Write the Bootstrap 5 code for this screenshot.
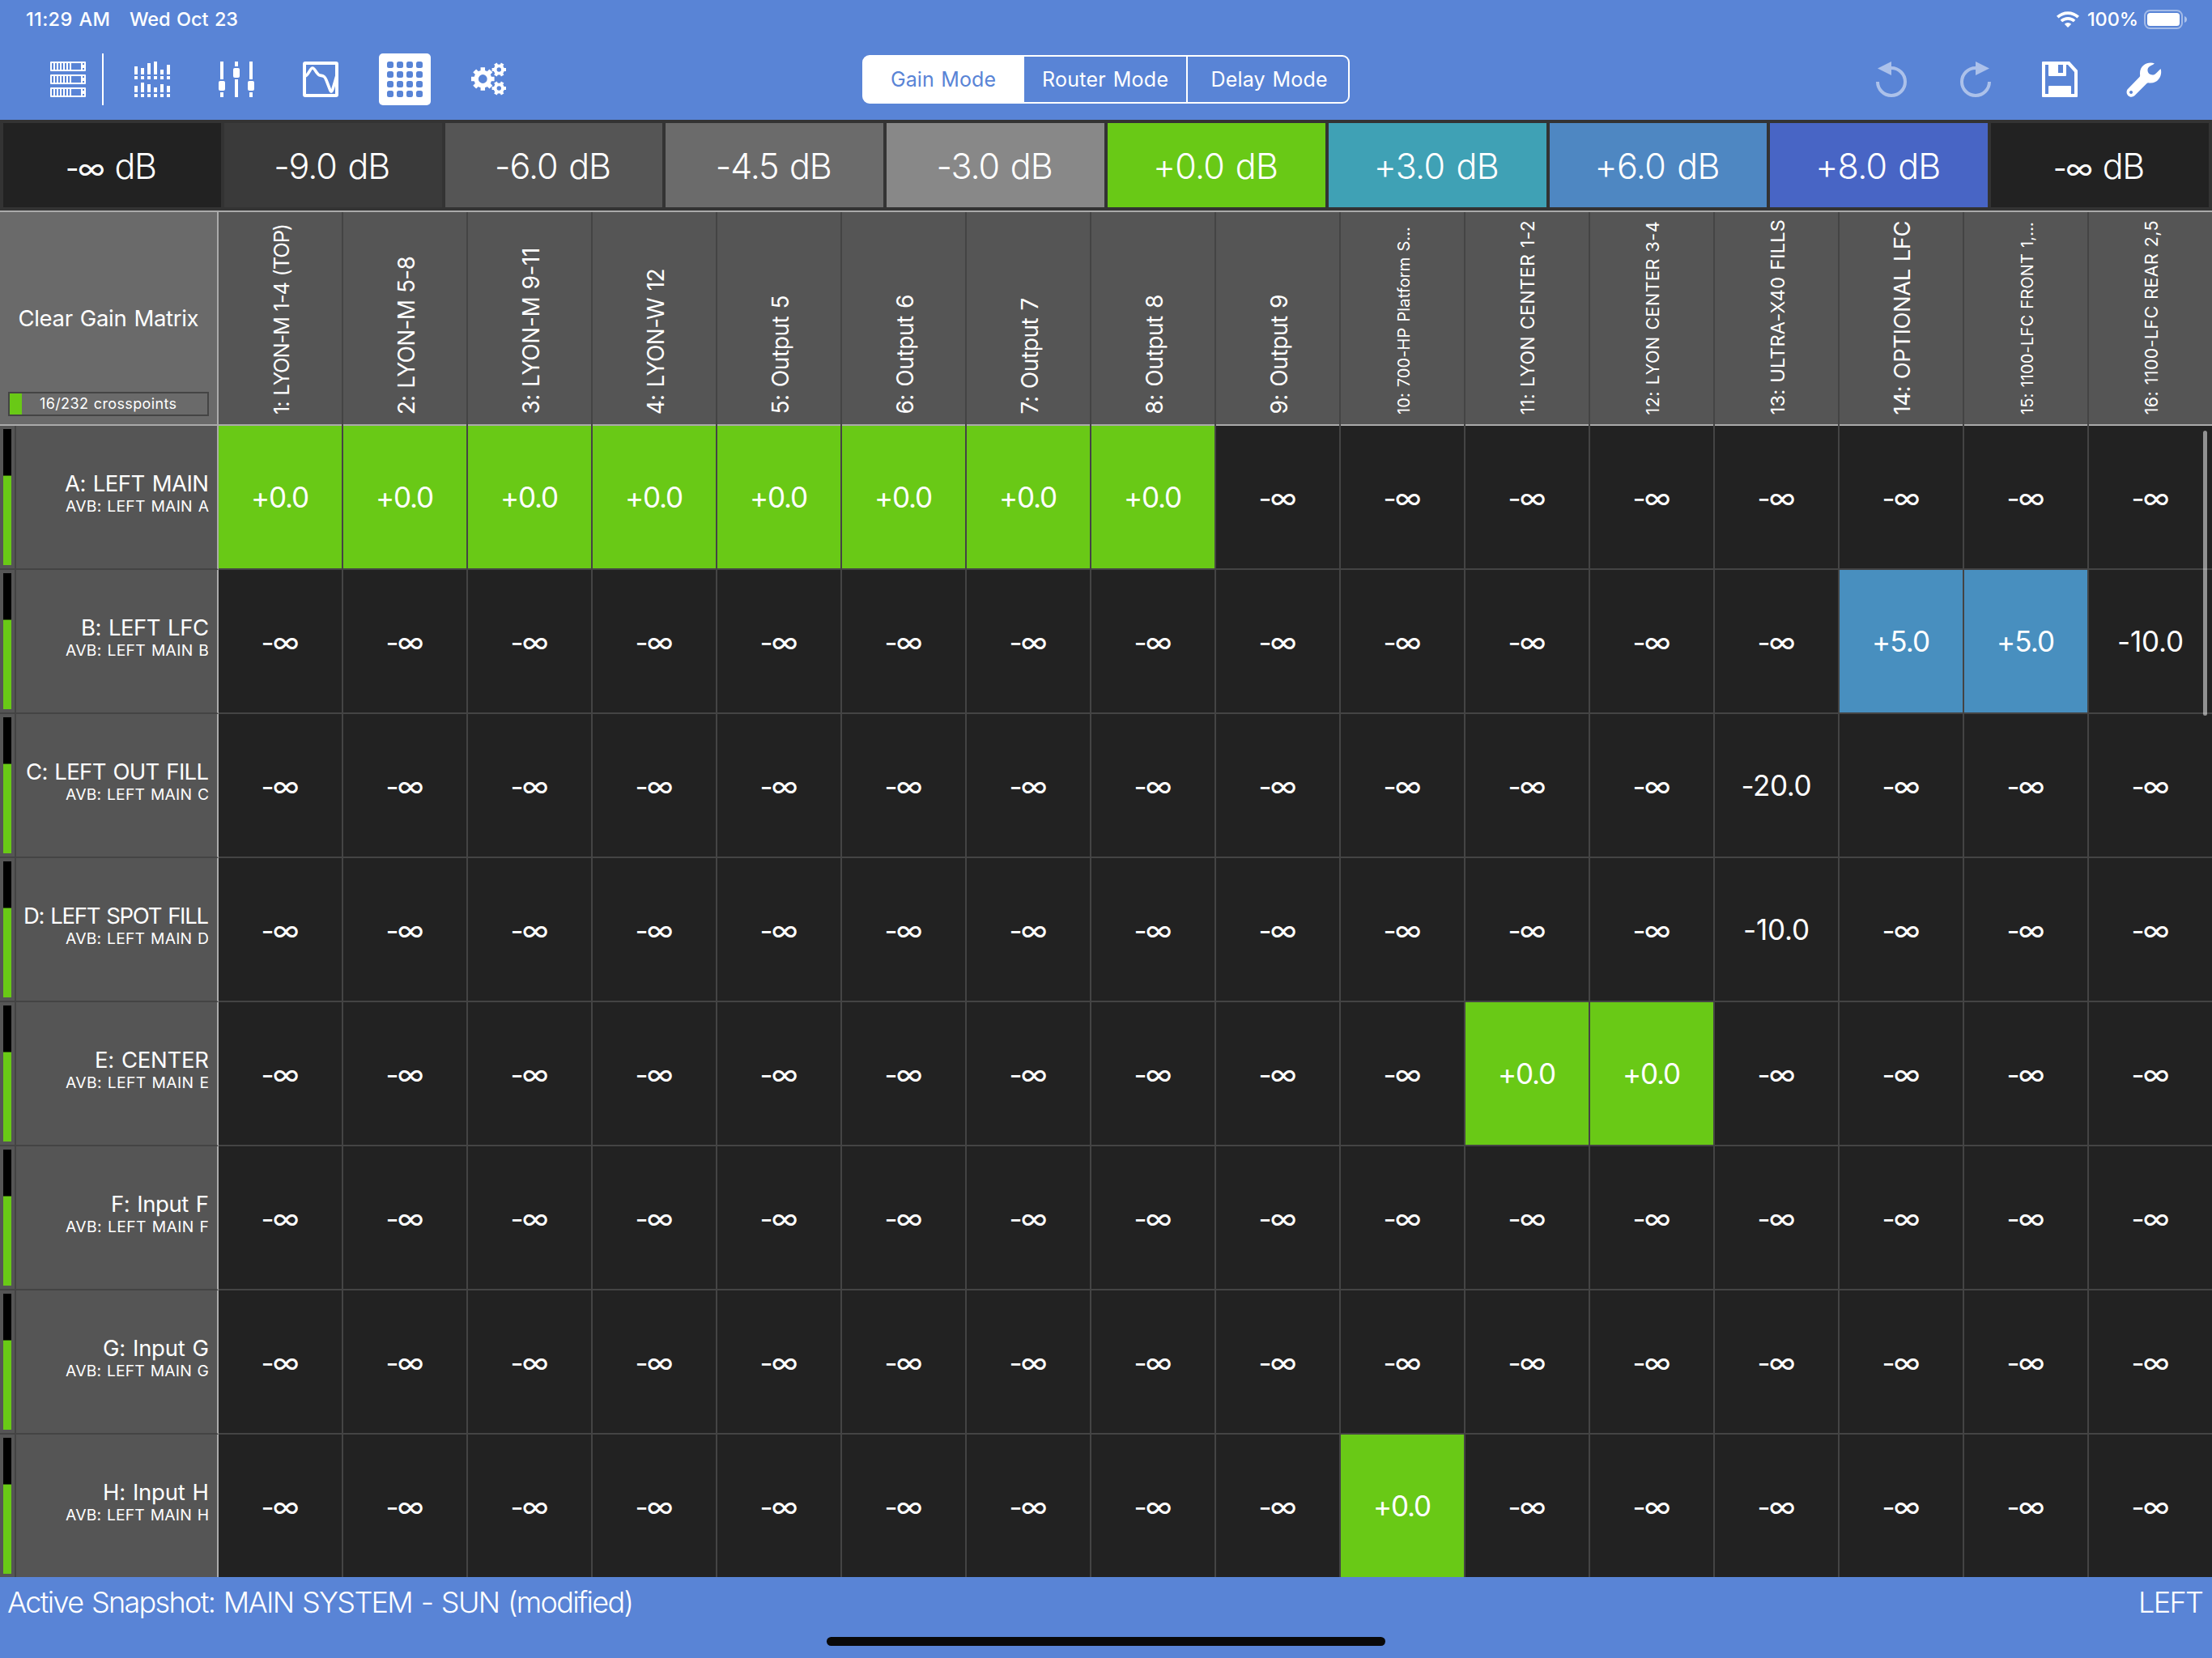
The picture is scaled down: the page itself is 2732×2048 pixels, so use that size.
<!DOCTYPE html>
<html lang="en">
<head>
    <meta charset="UTF-8">
    <meta name="viewport" content="width=device-width, initial-scale=1.0">
    <title>Gain Matrix</title>
    <link href="https://cdn.jsdelivr.net/npm/bootstrap@5.3.2/dist/css/bootstrap.min.css" rel="stylesheet">
    <style>
        body {
            width: 2732px;
            height: 2048px;
            overflow: hidden;
            background: #222;
            color: #fff;
            font-family: Inter, "Liberation Sans", sans-serif;
            line-height: 1;
        }
        .bg-app { background: #5984d6; }
        .fit { white-space: nowrap; display: inline-block; word-spacing: .06em; }

        /* status bar + toolbar */
        .app-header { height: 148px; }
        .status-bar { height: 48px; padding: 0 30px 0 32px; font-size: 23.5px; font-weight: 450; }
        .battery-text { margin: 0 7px 0 10px; }
        .toolbar { height: 100px; padding: 0 62px; }
        .tool-group { width: 1003px; }
        .tool-divider { width: 2px; height: 64px; background: #fff; margin: 0 38px 0 20px; }
        .tool-gap { margin-left: 60px; }
        .tool-active { width: 64px; height: 64px; background: #fff; border-radius: 5px; margin: 0 50px; }
        .mode-switch { width: 602px; height: 60px; }
        .mode-switch .btn {
            --bs-btn-color: #fff;
            --bs-btn-border-color: #fff;
            --bs-btn-border-width: 2px;
            --bs-btn-border-radius: 9px;
            --bs-btn-active-bg: #fff;
            --bs-btn-active-color: #5984d6;
            --bs-btn-active-border-color: #fff;
            --bs-btn-padding-x: 0;
            --bs-btn-padding-y: 0;
            width: 200px;
            flex: 0 0 auto;
            font-size: 25px;
            padding-top: 2px;
        }
        .mode-switch .btn + .btn { width: 204px; margin-left: -2px !important; }
        .mode-switch .btn:last-child { width: 202px; padding-left: 3px; }

        /* gain presets */
        .preset-bar { height: 112px; padding: 4px; gap: 4px; background: #333; }
        .preset { flex: 1 1 0; font-size: 43px; font-weight: 300; padding: 2px 2px 0 0; }
        .preset-inf { font-size: 36px; font-weight: 400; }

        /* matrix */
        .matrix-head { height: 266px; border-top: 2px solid #aaa; }
        .corner { width: 270px; flex: none; background: #6a6a6a; border-right: 2px solid #aaa; box-shadow: inset 0 -2px #aaa; }
        .corner-title { font-size: 27.5px; padding-top: 118px; }
        .crosspoints { height: 30px; margin: 0 10px 12px; border: 2px solid #444; font-size: 18px; }
        .crosspoints-bar { width: 15px; background: #69c916; }
        .out-head {
            width: 154px;
            flex: none;
            padding: 0 0 14px 3px;
            background: #555;
            border-right: 2px solid #444;
            box-shadow: inset 0 -2px #aaa;
        }
        .out-head span { writing-mode: vertical-rl; transform: rotate(180deg); }
        .in-row { height: 178px; }
        .in-row:last-child { height: 176px; }
        .in-head { width: 270px; flex: none; background: #555; border-right: 2px solid #aaa; }
        .in-row:not(:last-child) > div { border-bottom: 2px solid #444; }
        .meter { width: 20px; border-right: 2px solid #444; padding: 4px; }
        .meter-peak { height: 57px; background: #000; }
        .meter-level { background: #69c916; border-top: 1px solid #2e5a0a; }
        .in-label { padding: 55px 10px 0 0; }
        .in-name { font-size: 27.5px; line-height: 32px; }
        .in-source { font-size: 19.3px; line-height: 25px; }
        .gain { width: 154px; flex: none; border-right: 2px solid #444; font-size: 35px; background: #222; }
        .gain-off { padding-top: 2px; }
        .gain-0 { background: #69c916; }
        .gain-5 { background: #488fbf; }
        .scroll-thumb { right: 6px; top: 272px; width: 5px; height: 352px; border-radius: 3px; background: rgba(255, 255, 255, .5); }

        .app-footer { height: 100px; padding: 9px 10px 0 9px; font-size: 36px; font-weight: 300; line-height: 44px; }
        .home-bar { left: 1021px; bottom: 15px; width: 690px; height: 11px; border-radius: 6px; background: #090909; }
    </style>
</head>
<body>
    <header class="app-header bg-app">
        <div class="status-bar d-flex align-items-center justify-content-between">
            <div class="d-flex" style="gap: 24px">
                <span class="fit" data-w="104">11:29 AM</span>
                <span class="fit" data-w="134">Wed Oct 23</span>
            </div>
            <div class="d-flex align-items-center">
                <svg width="28" height="20" viewBox="0 0 28 20" fill="none" stroke="#fff">
                    <path d="M1.3 7.2a18.4 18.4 0 0 1 25.4 0" stroke-width="3.7"/>
                    <path d="M5.9 12a12 12 0 0 1 16.2 0" stroke-width="3.6"/>
                    <path d="M14 20l-4.2-4.3a6.2 6.2 0 0 1 8.4 0z" fill="#fff" stroke="none"/>
                </svg>
                <div class="battery-text"><span class="fit" data-w="63">100%</span></div>
                <svg width="54" height="24" viewBox="0 0 54 24">
                    <rect x="1" y="1" width="46" height="22" rx="6.5" fill="none" stroke="#fff" stroke-opacity=".45" stroke-width="2"/>
                    <rect x="4" y="4" width="40" height="16" rx="3.5" fill="#fff"/>
                    <path d="M50 8c4 1.200 4 6.800 0 8z" fill="#fff" fill-opacity=".5"/>
                </svg>
            </div>
        </div>

        <div class="toolbar d-flex align-items-center">
            <div class="tool-group d-flex align-items-center">
                <!-- device rack -->
                <svg width="44" height="44" viewBox="0 0 44 44">
                    <defs>
                        <g id="rackUnit">
                            <rect width="44" height="12" rx="1" fill="#fff"/>
                            <path d="M3 2v8M7 2v8M11 2v8M15 2v8M19 2v8M23 2v8" stroke="#5984d6" stroke-width="2"/>
                            <path d="M26 2h12v8h-12zM40 2h2v2h-2zM40 8h2v2h-2z" fill="#5984d6"/>
                        </g>
                    </defs>
                    <use href="#rackUnit"/>
                    <use href="#rackUnit" y="16"/>
                    <use href="#rackUnit" y="32"/>
                </svg>
                <div class="tool-divider"></div>
                <!-- level meters -->
                <svg width="44" height="44" viewBox="0 0 44 44" stroke="#fff" stroke-width="4">
                    <path d="M2 6V16M10 8V16M18 2V16M26 0V16M34 10V16M42 4V16"/>
                    <path d="M0 20H44M0 42H44" stroke-dasharray="4 4"/>
                    <path d="M2 30V38M10 26V38M18 28V38M26 32V38M34 28V38M42 30V38"/>
                </svg>
                <!-- faders -->
                <svg class="tool-gap" width="44" height="44" viewBox="0 0 44 44" fill="#fff">
                    <path d="M2 0h4v22h-4zM2 38h4v6h-4zM20 0h4v6h-4zM20 22h4v22h-4zM38 0h4v22h-4zM38 38h4v6h-4z"/>
                    <rect x="0" y="24" width="8" height="12" rx="2"/>
                    <rect x="18" y="8" width="8" height="12" rx="2"/>
                    <rect x="36" y="24" width="8" height="12" rx="2"/>
                </svg>
                <!-- eq curve -->
                <svg class="tool-gap" width="44" height="44" viewBox="0 0 44 44" fill="none" stroke="#fff" stroke-width="4">
                    <rect x="2" y="2" width="40" height="40" rx="1"/>
                    <path d="M3 18C7 17 9 8 12 8C15 8 17 16 21 17C26 18 27 18 29 23L34 36C35 38 36 37 37 34L42 17" stroke-width="3.600"/>
                </svg>
                <!-- matrix, selected -->
                <div class="tool-active d-flex align-items-center justify-content-center">
                    <svg width="44" height="44" viewBox="0 0 44 44" fill="#5984d6" id="gridIcon"></svg>
                </div>
                <!-- settings gears -->
                <svg width="44" height="44" viewBox="0 0 44 44" fill="none" stroke="#fff" overflow="visible" id="gearIcon"></svg>
            </div>

            <div class="mode-switch btn-group" role="group">
                <button type="button" class="btn active"><span class="fit" data-w="130">Gain Mode</span></button>
                <button type="button" class="btn"><span class="fit" data-w="156">Router Mode</span></button>
                <button type="button" class="btn"><span class="fit" data-w="144">Delay Mode</span></button>
            </div>

            <div class="d-flex ms-auto" style="gap: 60px">
                <!-- undo / redo -->
                <svg width="44" height="44" viewBox="0 0 44 44" opacity=".5" fill="#fff">
                    <path d="M5 25A17 17 0 1 0 22 8" fill="none" stroke="#fff" stroke-width="4"/>
                    <path d="M22 0V17L5 8.500z"/>
                </svg>
                <svg width="44" height="44" viewBox="0 0 44 44" opacity=".5" fill="#fff">
                    <path d="M39 25A17 17 0 1 1 22 8" fill="none" stroke="#fff" stroke-width="4"/>
                    <path d="M22 0V17L39 8.500z"/>
                </svg>
                <!-- save -->
                <svg width="44" height="44" viewBox="0 0 44 44" fill="#fff" fill-rule="evenodd">
                    <path d="M1 0H34L44 11V43Q44 44 43 44H1Q0 44 0 43V1Q0 0 1 0zM4 4V40H8V31Q8 30 9 30H35Q36 30 36 31V40H40V13L32 4H30V17Q30 18 29 18H9Q8 18 8 17V4zM20 4V14H26V4z"/>
                </svg>
                <!-- tools -->
                <svg width="44" height="44" viewBox="0 0 44 44" fill="#fff" fill-rule="evenodd">
                    <path d="M35 2.500C29 -.5 17 3 17 14.500C17 17 17.500 17.500 16.500 19L1.500 34.500C-2 40 5 47 10.500 42L25.500 27C27 25.500 28 26.500 30 26.500C41 26.500 45 15 42.500 9L37.500 14C34 18.500 26 17 26.500 10C27 6 30 6 35 2.500zM6 36a2 2 0 1 0 .1 0z"/>
                </svg>
            </div>
        </div>
    </header>

    <div class="preset-bar d-flex" id="presets"></div>

    <main class="position-relative">
        <div class="matrix-head d-flex" id="matrixHead">
            <div class="corner d-flex flex-column justify-content-between">
                <div class="corner-title text-center"><span class="fit" data-w="223">Clear Gain Matrix</span></div>
                <div class="crosspoints d-flex">
                    <div class="crosspoints-bar"></div>
                    <div class="flex-fill d-flex align-items-center justify-content-center pe-3"><span class="fit" data-w="169">16/232 crosspoints</span></div>
                </div>
            </div>
        </div>
        <div id="matrixRows"></div>
        <div class="scroll-thumb position-absolute"></div>
    </main>

    <footer class="app-footer bg-app d-flex justify-content-between position-relative">
        <span class="fit" data-w="774">Active Snapshot: MAIN SYSTEM - SUN (modified)</span>
        <span class="fit" data-w="81">LEFT</span>
        <div class="home-bar position-absolute"></div>
    </footer>

    <script src="https://cdn.jsdelivr.net/npm/bootstrap@5.3.2/dist/js/bootstrap.bundle.min.js"></script>
    <script>
        // label, background, text width
        const presets = [
            ['-∞ dB', '#222', 113], ['-9.0 dB', '#3a3a3a', 144], ['-6.0 dB', '#555', 144],
            ['-4.5 dB', '#6b6b6b', 144], ['-3.0 dB', '#888', 144], ['+0.0 dB', '#69c916', 155],
            ['+3.0 dB', '#3fa1b5', 155], ['+6.0 dB', '#4e87c2', 155], ['+8.0 dB', '#4865c5', 155],
            ['-∞ dB', '#222', 113]
        ];
        // label, font size, text length
        const outputs = [
            ['1: LYON-M 1-4 (TOP)', 25.5, 236], ['2: LYON-M 5-8', 28, 196], ['3: LYON-M 9-11', 28, 206],
            ['4: LYON-W 12', 28, 181], ['5: Output 5', 28, 147], ['6: Output 6', 28, 148],
            ['7: Output 7', 28, 144], ['8: Output 8', 28, 148], ['9: Output 9', 28, 148],
            ['10: 700-HP Platform S...', 20, 232], ['11: LYON CENTER 1-2', 23, 240],
            ['12: LYON CENTER 3-4', 21.5, 239], ['13: ULTRA-X40 FILLS', 23.5, 241],
            ['14: OPTIONAL LFC', 27.5, 240], ['15: 1100-LFC FRONT 1,...', 20, 238],
            ['16: 1100-LFC REAR 2,5', 21.5, 240]
        ];
        // label, text width
        const inputs = [
            ['A: LEFT MAIN', 178], ['B: LEFT LFC', 158], ['C: LEFT OUT FILL', 226], ['D: LEFT SPOT FILL', 229],
            ['E: CENTER', 141], ['F: Input F', 121], ['G: Input G', 131], ['H: Input H', 131]
        ];
        const gains = {
            A: { 1: '+0.0', 2: '+0.0', 3: '+0.0', 4: '+0.0', 5: '+0.0', 6: '+0.0', 7: '+0.0', 8: '+0.0' },
            B: { 14: '+5.0', 15: '+5.0', 16: '-10.0' },
            C: { 13: '-20.0' },
            D: { 13: '-10.0' },
            E: { 11: '+0.0', 12: '+0.0' },
            H: { 10: '+0.0' }
        };
        const gainClass = { '+0.0': 'gain-0', '+5.0': 'gain-5', '-∞': 'gain-off' };
        const gainWidth = { '+0.0': 72, '+5.0': 72, '-10.0': 82, '-20.0': 87, '-∞': 47 };

        document.getElementById('presets').innerHTML = presets.map(([label, color, w]) => `
            <div class="preset d-flex align-items-center justify-content-center" style="background: ${color}">
                <span class="fit" data-w="${w}">${label.replace('-∞', '<span class="preset-inf">-∞</span>')}</span>
            </div>`).join('');

        document.getElementById('matrixHead').insertAdjacentHTML('beforeend', outputs.map(([label, size, w]) => `
            <div class="out-head d-flex align-items-end justify-content-center">
                <span class="fit" data-h="${w}" style="font-size: ${size}px">${label}</span>
            </div>`).join(''));

        document.getElementById('matrixRows').innerHTML = inputs.map(([label, w]) => {
            const key = label[0];
            const cells = outputs.map((_, i) => {
                const value = (gains[key] || {})[i + 1] || '-∞';
                return `<div class="gain ${gainClass[value] || ''} d-flex align-items-center justify-content-center">
                    <span class="fit" data-w="${gainWidth[value]}">${value}</span>
                </div>`;
            }).join('');
            return `
            <div class="in-row d-flex overflow-hidden">
                <div class="in-head d-flex">
                    <div class="meter d-flex flex-column">
                        <div class="meter-peak"></div>
                        <div class="meter-level flex-fill"></div>
                    </div>
                    <div class="in-label flex-fill text-end">
                        <div class="in-name"><span class="fit" data-w="${w}">${label}</span></div>
                        <div class="in-source"><span class="fit" data-w="177">AVB: LEFT MAIN ${key}</span></div>
                    </div>
                </div>${cells}
            </div>`;
        }).join('');

        // 4x4 dots of the matrix icon
        let dots = '';
        for (let y = 0; y < 4; y++) {
            for (let x = 0; x < 4; x++) {
                dots += `<rect x="${x * 12}" y="${y * 12}" width="8" height="8" rx="2.5"/>`;
            }
        }
        document.getElementById('gridIcon').innerHTML = dots;

        // a ring with n teeth around it
        function gear(cx, cy, r, hole, n, tooth, turn) {
            const body = r * 0.76;
            let s = `<circle cx="${cx}" cy="${cy}" r="${(body + hole) / 2}" stroke-width="${body - hole}"/>`;
            for (let i = 0; i < n; i++) {
                s += `<path d="M${cx} ${cy - body + 1}V${cy - r}" stroke-width="${tooth}" transform="rotate(${turn + i * 360 / n} ${cx} ${cy})"/>`;
            }
            return s;
        }
        document.getElementById('gearIcon').innerHTML =
            gear(14.3, 21.5, 14.3, 5.4, 8, 5.5, 0) + gear(34.3, 10, 8.7, 2.7, 6, 4, 30) + gear(34.3, 33, 8.7, 2.7, 6, 4, 30);

        // spread or tighten each label to its width
        document.querySelectorAll('.fit').forEach(el => {
            const vertical = 'h' in el.dataset;
            const box = el.getBoundingClientRect();
            const target = Number(vertical ? el.dataset.h : el.dataset.w);
            const gap = (target - (vertical ? box.height : box.width)) / (el.textContent.length - 1);
            el.style.letterSpacing = gap + 'px';
            if (!vertical) {
                el.style.marginRight = -gap + 'px';
            }
        });
    </script>
</body>
</html>
